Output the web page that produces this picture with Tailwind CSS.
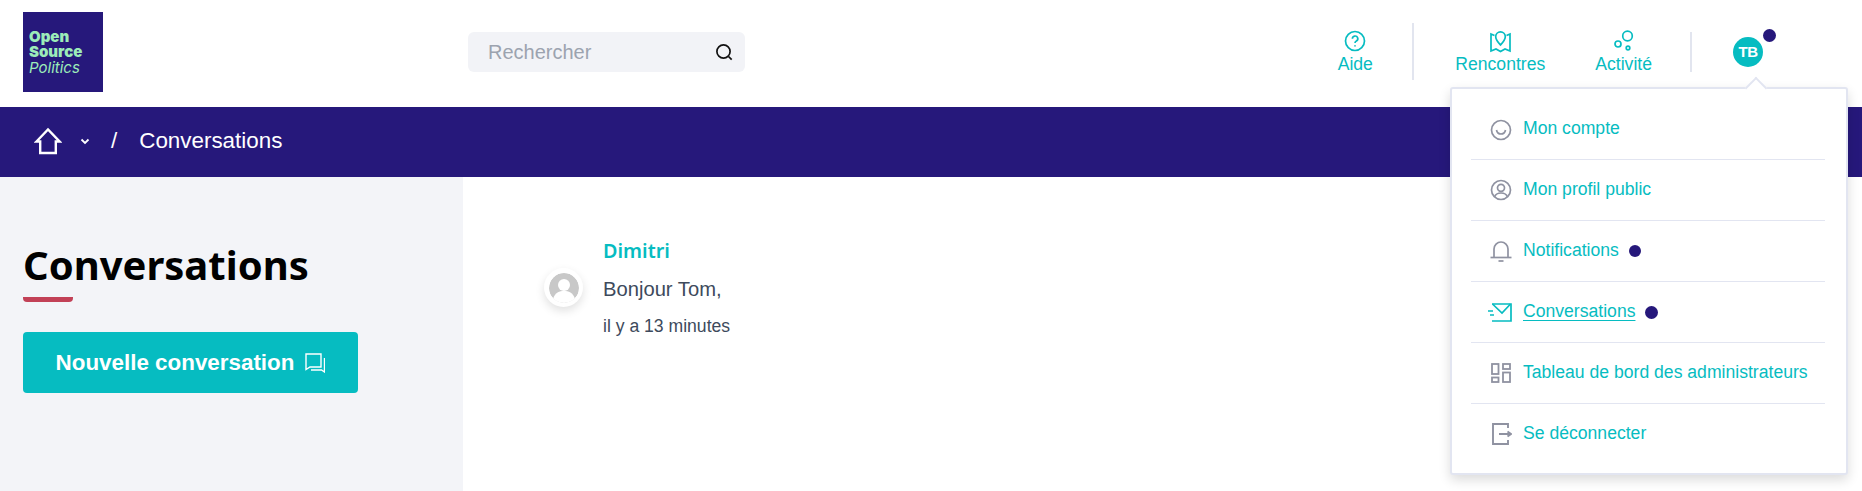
<!DOCTYPE html>
<html lang="fr">
  <head>
    <meta charset="UTF-8" />
    <title>Conversations</title>
    <script src="https://cdn.jsdelivr.net/npm/@tailwindcss/browser@4"></script>
  </head>
  <body class="relative h-[491px] overflow-hidden bg-white font-['Liberation_Sans',sans-serif] text-[#3d4a5c]">
    <!-- Header -->
    <header class="flex h-[107px] items-start bg-white">
      <div class="ml-[23px] mt-[12px] flex h-[80px] w-[80px] flex-col justify-center bg-[#26187b] pl-[6px] pt-[1px] font-['Inter',sans-serif] text-[#9cecb9]">
        <span class="h-[15px] text-[15px] font-black leading-[15px]">Open</span>
        <span class="h-[15px] text-[15px] font-black leading-[15px]">Source</span>
        <span class="h-[18px] text-[15px] italic leading-[18px]">Politics</span>
      </div>

      <div class="ml-[365px] mt-[32px] flex h-[40px] w-[277px] items-center justify-between rounded-md bg-[#f2f3f7] pl-[20px] pr-[11px]">
        <span class="text-[20px] text-[#9ca3af]">Rechercher</span>
        <svg class="h-[20px] w-[20px]" viewBox="0 0 20 20" fill="none" stroke="#111" stroke-width="1.7">
          <circle cx="9.5" cy="9.5" r="6.6" />
          <path d="M14.5 14.5l3.2 3.2" />
        </svg>
      </div>

      <nav class="ml-auto flex items-start text-[17.6px] text-[#06bcc1]">
        <a href="#" class="mt-[30px] flex w-[36px] flex-col items-center whitespace-nowrap">
          <svg class="h-[22px] w-[22px]" viewBox="0 0 22 22" fill="none" stroke="currentColor" stroke-width="1.7">
            <circle cx="11" cy="11" r="9.500" />
            <path d="M8.400 8.800a2.700 2.700 0 1 1 4 2.300c-.9.500-1.400 1-1.400 2" />
            <path d="M11 15.200v1.400" />
          </svg>
          <span class="mt-[2px] leading-[20px]">Aide</span>
        </a>
        <div class="ml-[39px] mt-[23px] h-[57px] w-[2px] bg-[#e2e5ef]"></div>
        <a href="#" class="ml-[41px] mt-[30px] flex flex-col items-center whitespace-nowrap">
          <svg class="h-[23px] w-[23px]" viewBox="0 0 23 23" fill="none" stroke="currentColor" stroke-width="1.700">
            <path d="M11.500 15c-2.700-3-4.800-5.300-4.800-8.300a4.800 4.800 0 0 1 9.600 0c0 3-2.100 5.300-4.800 8.300z" />
            <path d="M5.500 5.500L2 4v17l5-2 4.500 2.500 4.500-2.500 5 2V4l-3.500 1.500" />
          </svg>
          <span class="mt-[1px] leading-[20px]">Rencontres</span>
        </a>
        <a href="#" class="ml-[50px] mt-[30px] flex flex-col items-center whitespace-nowrap">
          <svg class="h-[22px] w-[22px]" viewBox="0 0 22 22" fill="none" stroke="currentColor" stroke-width="1.700">
            <circle cx="14.500" cy="6" r="4.800" />
            <circle cx="5" cy="14" r="3" />
            <circle cx="15" cy="18" r="1.800" />
          </svg>
          <span class="mt-[2px] leading-[20px]">Activité</span>
        </a>
        <div class="ml-[38px] mt-[32px] h-[40px] w-[2px] bg-[#e2e5ef]"></div>
        <div class="relative ml-[41px] mr-[99px] mt-[37px] flex h-[30px] w-[30px] items-center justify-center rounded-full bg-[#06bcc1] text-[15px] font-bold tracking-[-0.5px] text-white">
          TB
          <span class="absolute left-[30px] top-[-8px] h-[13px] w-[13px] rounded-full bg-[#26187b]"></span>
        </div>
      </nav>
    </header>

    <!-- Breadcrumb -->
    <div class="flex h-[70px] items-center bg-[#26187b] pb-[2px] text-white">
      <svg class="ml-[34px] h-[28px] w-[28px]" viewBox="0 0 28 28" fill="none" stroke="currentColor" stroke-width="2.400">
        <path d="M2.500 14.500L14 2.500l11.500 12h-3.700V26H6.200V14.500z" />
      </svg>
      <svg class="ml-[18px] h-[10px] w-[10px]" viewBox="0 0 10 10" fill="none" stroke="currentColor" stroke-width="1.800">
        <path d="M1.500 3.500L5 7l3.500-3.500" />
      </svg>
      <span class="ml-[21px] text-[22.4px]">/</span>
      <span class="ml-[22px] text-[22.4px]">Conversations</span>
    </div>

    <!-- Main -->
    <main class="flex h-[314px]">
      <aside class="w-[463px] bg-[#f3f4f8] px-[23px] pt-[63px]">
        <h1 class="font-['Noto_Sans',sans-serif] text-[40px] font-bold leading-[50px] text-black">Conversations</h1>
        <div class="mt-[7px] h-[5px] w-[50px] rounded-b-[4px] bg-[#c24157]"></div>
        <button class="mt-[30px] flex h-[61px] w-[335px] items-center justify-center rounded-[4px] bg-[#06bcc1] text-[22.4px] font-bold text-white">
          Nouvelle conversation
          <svg class="ml-[11px] h-[20px] w-[20px]" viewBox="0 0 20 20" fill="none" stroke="currentColor" stroke-width="1.400">
            <path d="M1 1h15v13H5l-4 2.500z" />
            <path d="M19.500 5v14l-3-2H6" />
          </svg>
        </button>
      </aside>

      <section class="flex items-start pl-[81px] pt-[62px]">
        <div class="mt-[29px] flex h-[39px] w-[39px] items-center justify-center rounded-full bg-white shadow-[0_4px_10px_rgba(0,0,0,0.12)]">
          <svg class="h-[30px] w-[30px] rounded-full" viewBox="0 0 30 30">
            <circle cx="15" cy="15" r="15" fill="#c8c8c8" />
            <circle cx="15" cy="12" r="6" fill="#fff" />
            <path d="M4 26c2-6.500 6.500-8 11-8s9 1.500 11 8c-3 3-7 4-11 4s-8-1-11-4z" fill="#fff" />
          </svg>
        </div>
        <div class="ml-[20px]">
          <a href="#" class="block font-['Noto_Sans',sans-serif] text-[19.8px] font-semibold leading-[24px] text-[#06bcc1]">Dimitri</a>
          <p class="mt-[14px] text-[20.2px] leading-[24px]">Bonjour Tom,</p>
          <p class="mt-[14px] text-[17.6px] leading-[22px]">il y a 13 minutes</p>
        </div>
      </section>
    </main>

    <!-- Account menu -->
    <div class="absolute left-[1450px] top-[87px] w-[398px] rounded-[3px] border-2 border-[#e2e5f1] bg-white pl-[19px] pr-[19px] shadow-[0_5px_12px_rgba(0,0,0,0.14)]">
      <span class="absolute left-[296px] top-[-9px] h-[16px] w-[16px] rotate-45 border-l-2 border-t-2 border-[#e2e5f1] bg-white"></span>
      <ul class="relative mr-[2px] text-[17.6px] text-[#06bcc1]">
        <li class="flex h-[71px] items-center border-b border-[#e2e5f1] pt-[11px]">
          <svg class="ml-[19px] h-[22px] w-[22px]" viewBox="0 0 22 22" fill="none" stroke="#8f92a1" stroke-width="1.700">
            <circle cx="11" cy="11" r="9.500" />
            <path d="M6.500 11c.5 2.600 2.200 4 4.500 4s4-1.400 4.500-4" />
          </svg>
          <a href="#" class="ml-[11px] pb-[2px]">Mon compte</a>
        </li>
        <li class="flex h-[61px] items-center border-b border-[#e2e5f1]">
          <svg class="ml-[19px] h-[22px] w-[22px]" viewBox="0 0 22 22" fill="none" stroke="#8f92a1" stroke-width="1.700">
            <circle cx="11" cy="11" r="9.500" />
            <circle cx="11" cy="8.800" r="3.500" />
            <path d="M4.500 18c1-3 3.500-4 6.500-4s5.500 1 6.500 4" />
          </svg>
          <a href="#" class="ml-[11px] pb-[2px]">Mon profil public</a>
        </li>
        <li class="flex h-[61px] items-center border-b border-[#e2e5f1]">
          <svg class="ml-[19px] h-[22px] w-[22px]" viewBox="0 0 22 22" fill="none" stroke="#8f92a1" stroke-width="1.700">
            <path d="M4 17.500V9a7 7 0 0 1 14 0v8.500" />
            <path d="M0.500 17.500h21" />
            <path d="M8.500 21h5" />
          </svg>
          <a href="#" class="ml-[11px] pb-[2px]">Notifications</a>
          <span class="ml-[10px] h-[12px] w-[12px] rounded-full bg-[#26187b]"></span>
        </li>
        <li class="flex h-[61px] items-center border-b border-[#e2e5f1]">
          <svg class="ml-[17px] h-[22px] w-[24px]" viewBox="0 0 24 22" fill="none" stroke="currentColor" stroke-width="1.700">
            <path d="M4 3h19v17H4" />
            <path d="M4.500 3L14 12l8.500-9" />
            <path d="M0 10h5M2 14h4" />
          </svg>
          <a href="#" class="ml-[11px] pb-[2px] underline underline-offset-[3px]">Conversations</a>
          <span class="ml-[10px] h-[13px] w-[13px] rounded-full bg-[#26187b]"></span>
        </li>
        <li class="flex h-[61px] items-center border-b border-[#e2e5f1]">
          <svg class="ml-[20px] h-[20px] w-[20px]" viewBox="0 0 20 20" fill="none" stroke="#8f92a1" stroke-width="1.800">
            <rect x="1" y="1" width="6.500" height="10" />
            <rect x="12" y="1" width="7" height="5" />
            <rect x="1" y="14.500" width="6.500" height="4.500" />
            <rect x="12" y="9.500" width="7" height="9.500" />
          </svg>
          <a href="#" class="ml-[12px] pb-[2px]">Tableau de bord des administrateurs</a>
        </li>
        <li class="flex h-[69px] items-center pb-[9px]">
          <svg class="ml-[21px] h-[22px] w-[20px]" viewBox="0 0 20 22" fill="none" stroke="#8f92a1" stroke-width="1.900">
            <path d="M16 5V1H1v20h15v-4" />
            <path d="M7 11h12M15.500 8.500L19 11l-3.500 2.500" />
          </svg>
          <a href="#" class="ml-[11px] pb-[2px]">Se déconnecter</a>
        </li>
      </ul>
    </div>
  </body>
</html>
